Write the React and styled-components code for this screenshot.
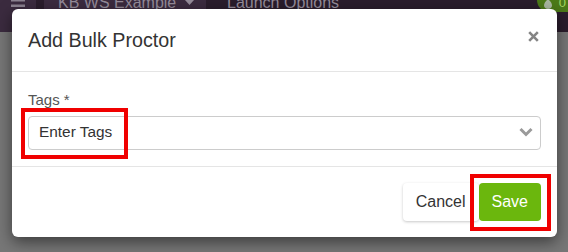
import styled, { createGlobalStyle } from "styled-components";

const GlobalStyle = createGlobalStyle`
  html, body {
    margin: 0;
    padding: 0;
    background: #777777;
    font-family: "Liberation Sans", Arial, sans-serif;
  }
`;

const Page = styled.div`
  position: relative;
  width: 568px;
  height: 252px;
  overflow: hidden;
  background: #777777;
`;

const TopBar = styled.div`
  display: flex;
  align-items: flex-start;
  height: 32px;
  background: #2a1d2c;
`;

const MenuZone = styled.div`
  width: 36px;
  height: 32px;
  background: #3b2b3f;
  display: flex;
  justify-content: center;
`;

const Workspace = styled.div`
  margin-left: 8px;
  width: 162px;
  height: 32px;
  padding-left: 14px;
  box-sizing: border-box;
  background: #3b2b3f;
  display: flex;
  align-items: flex-start;
  gap: 9px;
`;

const NavText = styled.span`
  margin-top: -5px;
  font-size: 16px;
  line-height: 16px;
  color: #958c9a;
  white-space: nowrap;
`;

const LaunchText = styled(NavText)`
  margin-left: 21px;
`;

const Badge = styled.div`
  margin-left: auto;
  margin-top: -12px;
  width: 31px;
  height: 24px;
  border-radius: 12px 0 0 12px;
  background: #4c7a18;
  display: flex;
  align-items: flex-end;
  justify-content: space-between;
  padding: 0 2px 3px 7px;
  box-sizing: border-box;
  font-size: 13px;
  line-height: 13px;
  color: #a8d862;
`;

const Modal = styled.div`
  position: absolute;
  top: 9px;
  left: 12px;
  width: 545px;
  background: #fff;
  border-radius: 6px;
  box-shadow: 0 5px 15px rgba(0, 0, 0, 0.5);
`;

const Header = styled.div`
  height: 62px;
  padding: 0 18px 0 16px;
  display: flex;
  align-items: center;
  justify-content: space-between;
  border-bottom: 1px solid #e5e5e5;
`;

const Title = styled.h4`
  margin: 0;
  font-size: 19.7px;
  line-height: 22px;
  font-weight: 400;
  color: #333;
`;

const Close = styled.button`
  margin-top: -8px;
  padding: 0;
  border: 0;
  background: none;
  display: flex;
  color: #858585;
`;

const Body = styled.div`
  padding: 18px 16px 16px;
`;

const Label = styled.label`
  display: block;
  margin-bottom: 6px;
  font-size: 15px;
  line-height: 20px;
  color: #555;
`;

const Select = styled.div`
  position: relative;
  height: 34px;
  box-sizing: border-box;
  border: 1px solid #cccccc;
  border-radius: 4px;
  padding: 0 7px 2px 10px;
  display: flex;
  align-items: center;
  justify-content: space-between;
  font-size: 15.4px;
  color: #333;
`;

const Highlight = styled.span`
  position: absolute;
  top: ${(p) => p.$top}px;
  left: ${(p) => p.$left}px;
  right: ${(p) => p.$right}px;
  bottom: ${(p) => p.$bottom}px;
  border: 4px solid #f00000;
  pointer-events: none;
`;

const Footer = styled.div`
  border-top: 1px solid #e5e5e5;
  padding: 16px 16px;
  display: flex;
  justify-content: flex-end;
`;

const Button = styled.button`
  position: relative;
  height: 38px;
  padding: 0 13px;
  border: 0;
  border-radius: 4px;
  font-family: inherit;
  font-size: 16px;
  background: ${(p) => (p.$primary ? "#6bb70d" : "#fff")};
  color: ${(p) => (p.$primary ? "#fff" : "#333")};
  box-shadow: ${(p) => (p.$primary ? "none" : "0 1px 3px rgba(0,0,0,0.22)")};
`;

export default function App() {
  return (
    <Page>
      <GlobalStyle />
      <TopBar>
        <MenuZone>
          <svg width="14" height="10" viewBox="0 0 14 10">
            <rect x="0" y="-1" width="14" height="2.5" fill="#8b8290" />
            <rect x="0" y="4.5" width="14" height="2.5" fill="#8b8290" />
          </svg>
        </MenuZone>
        <Workspace>
          <NavText>KB WS Example</NavText>
          <svg width="9" height="6" viewBox="0 0 9 6">
            <path d="M0 0 L9 0 L4.5 5 Z" fill="#958c9a" />
          </svg>
        </Workspace>
        <LaunchText>Launch Options</LaunchText>
        <Badge>
          <svg width="8" height="10" viewBox="0 0 8 10">
            <path d="M4 0 C6 2 8 4 8 6.5 C8 8.5 6 10 4 10 C2 10 0 8.5 0 6.5 C0 4 2 2 4 0 Z" fill="#a9b7a0" />
          </svg>
          <span>0</span>
        </Badge>
      </TopBar>

      <Modal>
        <Header>
          <Title>Add Bulk Proctor</Title>
          <Close aria-label="close">
            <svg width="11" height="11" viewBox="0 0 11 11">
              <path d="M1.2 1.2 L9.8 9.8 M9.8 1.2 L1.2 9.8" stroke="currentColor" strokeWidth="2.6" />
            </svg>
          </Close>
        </Header>
        <Body>
          <Label>Tags *</Label>
          <Select>
            <span>Enter Tags</span>
            <svg width="14" height="10" viewBox="0 0 14 10">
              <path d="M1.5 2 L7 7.5 L12.5 2" fill="none" stroke="#9a9a9a" strokeWidth="3" />
            </svg>
            <Highlight $top={-9} $left={-8} $right={412} $bottom={-10} />
          </Select>
        </Body>
        <Footer>
          <Button>Cancel</Button>
          <Button $primary>
            Save
            <Highlight $top={-9} $left={-9} $right={-10} $bottom={-10} />
          </Button>
        </Footer>
      </Modal>
    </Page>
  );
}
